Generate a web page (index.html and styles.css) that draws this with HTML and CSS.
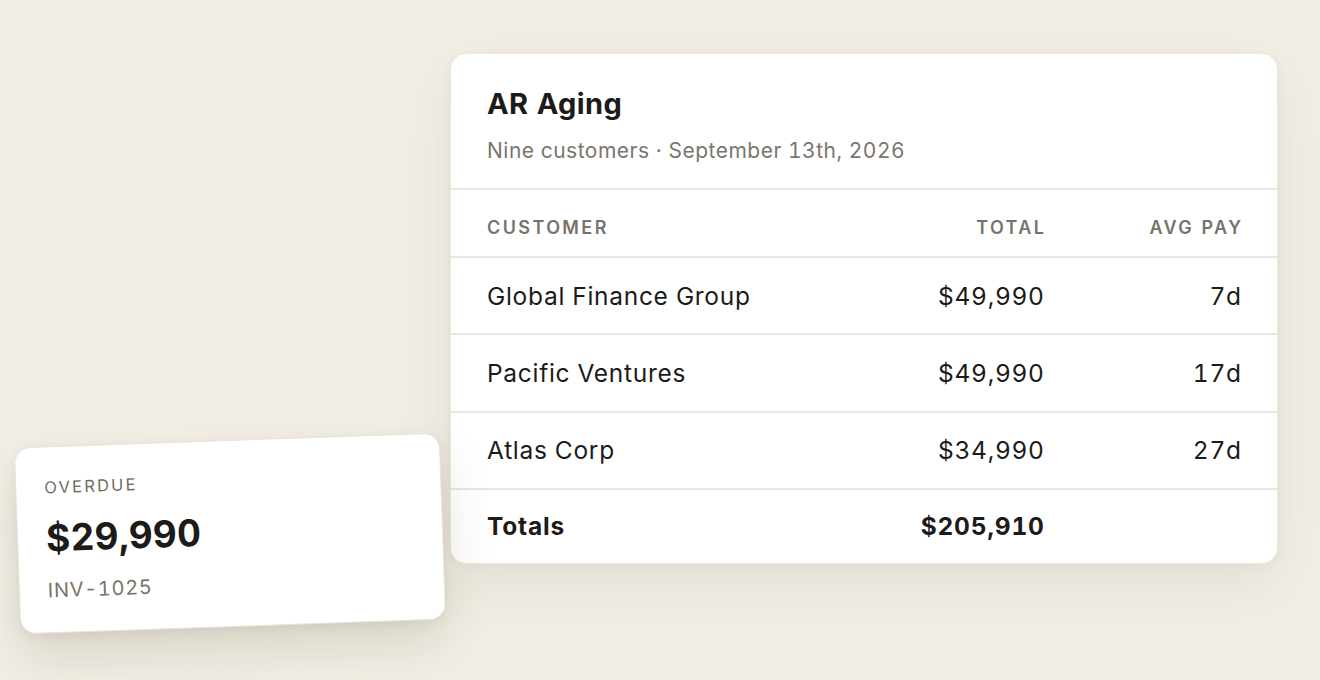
FILE: index.html
```html
<!DOCTYPE html>
<html lang="en">
<head>
<meta charset="utf-8">
<title>AR Aging</title>
<link rel="stylesheet" href="styles.css">
</head>
<body>
<main class="stage">
  <section class="card">
    <header class="card-head">
      <h1 class="title">AR Aging</h1>
      <p class="subtitle">Nine customers · September 13th, 2026</p>
    </header>
    <div class="row row-head">
      <span class="c-name">Customer</span>
      <span class="c-num">Total</span>
      <span class="c-num">Avg Pay</span>
    </div>
    <div class="row">
      <span class="c-name">Global Finance Group</span>
      <span class="c-num">$49,990</span>
      <span class="c-num">7d</span>
    </div>
    <div class="row">
      <span class="c-name">Pacific Ventures</span>
      <span class="c-num">$49,990</span>
      <span class="c-num">17d</span>
    </div>
    <div class="row">
      <span class="c-name">Atlas Corp</span>
      <span class="c-num">$34,990</span>
      <span class="c-num">27d</span>
    </div>
    <div class="row row-total">
      <span class="c-name">Totals</span>
      <span class="c-num">$205,910</span>
      <span class="c-num"></span>
    </div>
  </section>

  <aside class="overdue">
    <div class="ov-label">OVERDUE</div>
    <div class="ov-amount">$29,990</div>
    <div class="ov-inv">INV-1025</div>
  </aside>
</main>
</body>
</html>
```

FILE: styles.css
```css
* { box-sizing: border-box; }
html, body {
  margin: 0;
  padding: 0;
  width: 1320px;
  height: 680px;
  overflow: hidden;
}
body {
  background: #f3efe6;
  font-family: "Inter", "Liberation Sans", sans-serif;
  color: #1c1b19;
  font-variant-numeric: tabular-nums;
}
.stage {
  position: relative;
  width: 1320px;
  height: 680px;
  padding: 53px 0 0 450px;
}
.card {
  width: 828px;
  background: #ffffff;
  border-radius: 16px;
  border: 1px solid #ece8df;
  box-shadow: 0 20px 60px rgba(90, 75, 45, 0.10), 0 2px 8px rgba(90, 75, 45, 0.05);
  overflow: hidden;
}
.card-head {
  padding: 32px 36px 23px 36px;
  border-bottom: 2px solid #e9e7e3;
}
.title {
  margin: 0;
  font-size: 29px;
  font-weight: 700;
  letter-spacing: 0.4px;
  line-height: 36px;
}
.subtitle {
  margin: 15px 0 0;
  font-size: 21px;
  line-height: 28px;
  color: #7a766e;
  font-weight: 400;
  letter-spacing: 0.5px;
}
.row {
  display: grid;
  grid-template-columns: 1fr 240px 197px;
  align-items: center;
  padding: 0 36px;
  height: 77.3px;
  border-bottom: 2px solid #e9e7e3;
  font-size: 24.5px;
  letter-spacing: 0.7px;
}
.row:last-child { border-bottom: none; height: 73px; }
.row-head {
  height: 68px;
  padding-top: 8px;
  font-size: 18px;
  font-weight: 600;
  letter-spacing: 2.4px;
  text-transform: uppercase;
  color: #77736a;
}
.c-num { text-align: right; margin-right: -0.7px; }
.row-head .c-num { margin-right: -2.4px; }
.row-total { font-weight: 700; letter-spacing: 0.8px; }

.overdue {
  position: absolute;
  left: 17px;
  top: 440px;
  width: 426px;
  height: 187px;
  background: #ffffff;
  border-radius: 16px;
  border: 1px solid #e7e3da;
  transform: rotate(-2deg);
  box-shadow: 0 24px 50px rgba(90, 75, 45, 0.16), 0 4px 12px rgba(90, 75, 45, 0.08);
  padding: 30px 28px 0 28px;
}
.ov-label {
  font-size: 16.5px;
  letter-spacing: 2.2px;
  color: #6f6b63;
  line-height: 20px;
}
.ov-amount {
  margin-top: 21px;
  font-size: 37px;
  font-weight: 700;
  letter-spacing: 0.2px;
  line-height: 40px;
  color: #1c1b19;
}
.ov-inv {
  margin-top: 19px;
  font-size: 20px;
  letter-spacing: 0.7px;
  color: #77736a;
  line-height: 26px;
}
```
